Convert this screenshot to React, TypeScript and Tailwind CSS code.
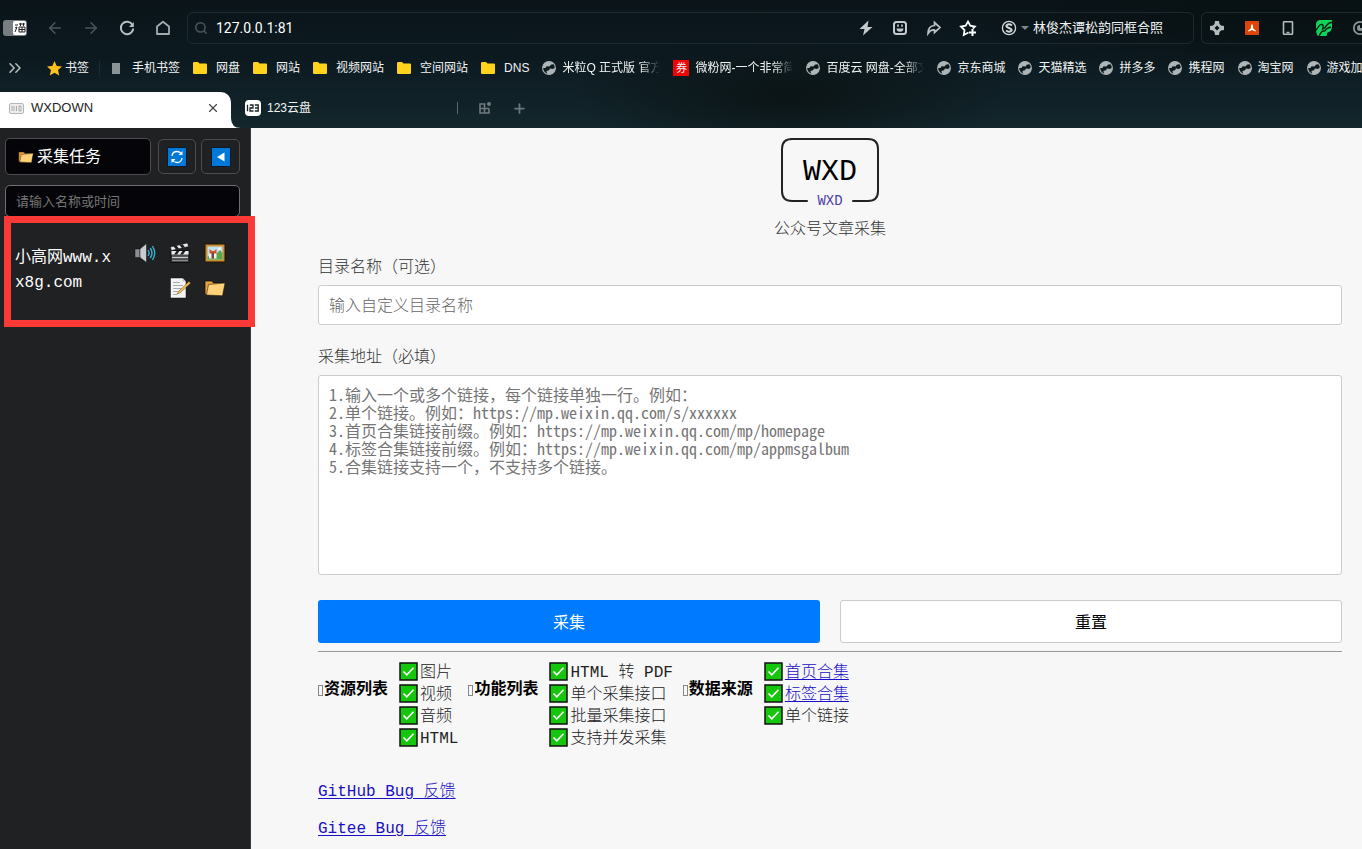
import React, { useState } from 'react';
import { ArrowLeft, ArrowRight, ChevronsRight, Plus, Search, X } from 'lucide-react';

interface Bookmark {
  label: string;
  icon: 'folder' | 'globe' | 'ticket';
  clipped?: boolean;
}

const bookmarks: Bookmark[] = [
  { label: '网盘', icon: 'folder' },
  { label: '网站', icon: 'folder' },
  { label: '视频网站', icon: 'folder' },
  { label: '空间网站', icon: 'folder' },
  { label: 'DNS', icon: 'folder' },
  { label: '米粒Q 正式版 官方', icon: 'globe', clipped: true },
  { label: '微粉网-一个非常简', icon: 'ticket', clipped: true },
  { label: '百度云 网盘-全部文', icon: 'globe', clipped: true },
  { label: '京东商城', icon: 'globe' },
  { label: '天猫精选', icon: 'globe' },
  { label: '拼多多', icon: 'globe' },
  { label: '携程网', icon: 'globe' },
  { label: '淘宝网', icon: 'globe' },
  { label: '游戏加', icon: 'globe' },
];

const features = [
  { title: '资源列表', items: ['图片', '视频', '音频', 'HTML'] },
  { title: '功能列表', items: ['HTML 转 PDF', '单个采集接口', '批量采集接口', '支持并发采集'] },
  { title: '数据来源', items: ['首页合集', '标签合集', '单个链接'], links: 2 },
];

const urlHint = [
  '1.输入一个或多个链接，每个链接单独一行。例如：',
  '2.单个链接。例如：https://mp.weixin.qq.com/s/xxxxxx',
  '3.首页合集链接前缀。例如：https://mp.weixin.qq.com/mp/homepage',
  '4.标签合集链接前缀。例如：https://mp.weixin.qq.com/mp/appmsgalbum',
  '5.合集链接支持一个，不支持多个链接。',
].join('\n');

/* ---------- icons ---------- */

const FolderYellow = () => (
  <svg className="w-[14px] h-[14px] shrink-0" viewBox="0 0 14 14">
    <path d="M0 2.2Q0 1 1.2 1H5l1.5 1.500h6.300Q14 2.500 14 3.700v8.100q0 1.200-1.200 1.200H1.200Q0 13 0 11.800z" fill="#ffd21c" />
  </svg>
);

const Globe = () => (
  <svg className="w-[14px] h-[14px] shrink-0" viewBox="0 0 14 14">
    <circle cx="7" cy="7" r="6.4" fill="none" stroke="#aeb5b7" strokeWidth="1.1" />
    <path d="M.8 7Q1 2 5.500.800q4-.6 6.500 2.200L8.800 3.800 7.500 5.500 4.500 5.300 3.500 7z" fill="#aeb5b7" />
    <path d="M13.300 6.200Q13.400 11 9 13q-2.500.6-4-.2L4.500 10 7 9.200 8 7.500l3 .5z" fill="#aeb5b7" />
  </svg>
);

const FolderEmoji = ({ className }: { className: string }) => (
  <svg className={className} viewBox="0 0 22 22">
    <path d="M1 4h7l1.500 2H19v12.500H3L1 17z" fill="#e9a23c" stroke="#15120c" strokeWidth=".8" />
    <path d="M4.500 7.500 21 6 18.500 18.700 2.500 18z" fill="#ffd27a" stroke="#15120c" strokeWidth=".5" />
  </svg>
);

const SpeakerEmoji = () => (
  <svg className="w-[22px] h-[22px]" viewBox="0 0 22 22">
    <path d="M1 7h5v8.500H1z" fill="#8b8f94" stroke="#111" strokeWidth=".5" />
    <path d="M6 7 12.500 1.500v19L6 15.500z" fill="#c9ccd0" stroke="#111" strokeWidth=".5" />
    <g fill="none" stroke="#35b5cf" strokeWidth="1.400" strokeLinecap="round">
      <path d="M14.300 8.500q1.500 2.500 0 5" />
      <path d="M16.500 6.500q3 4.500 0 9" />
      <path d="M18.700 4.500q4 6.500 0 13" />
    </g>
  </svg>
);

const ClapperEmoji = () => (
  <svg className="w-[22px] h-[22px]" viewBox="0 0 22 22">
    <path d="M2 8.500h18v12H2z" fill="#4b4d50" stroke="#0d0d0d" />
    <path d="M2.500 9h17v3.500h-17z" fill="#ececec" />
    <path d="M5 12.500 7.500 9h3L8 12.500zM11 12.500 13.500 9h3L14 12.500z" fill="#1c1c1c" />
    <path d="M1.500 5 18.500 1l1 3.500L2.300 8.500z" fill="#ececec" stroke="#0d0d0d" strokeWidth=".5" />
    <path d="M4.500 4.300 7 7.400l3-.7-2.500-3.100zM10.500 2.900 13 6l3-.7-2.500-3.100z" fill="#1c1c1c" />
    <path d="M3 15.500h16" stroke="#c9cbcd" strokeWidth="1.200" />
    <path d="M3 18.500h16" stroke="#85888a" />
  </svg>
);

const PictureEmoji = () => (
  <svg className="w-[22px] h-[22px]" viewBox="0 0 22 22">
    <path d="M1 2h20v18H1z" fill="#c98f2b" stroke="#1a1408" />
    <path d="M3.500 4.500h15v13h-15z" fill="#bfe0f2" />
    <path d="M3.500 14.500 10 13l3-2 3-3 2.500 3v6.500h-15z" fill="#5aa64c" />
    <path d="M5.500 7 8 9h2l2.500-2v6H5.500z" fill="#d9512c" />
    <path d="M5 11.500h3.500v5H5zM9.500 11.500h3v5h-3z" fill="#f5f0ea" />
    <path d="M7.500 10.500h2.500v6H7.500z" fill="#6b4a4a" />
    <circle cx="15.500" cy="6.800" r="1.400" fill="#fff" />
  </svg>
);

const MemoEmoji = () => (
  <svg className="w-[22px] h-[22px]" viewBox="0 0 22 22">
    <path d="M1.500 1h12l3.500 3.500V21H1.500z" fill="#f4f4f4" stroke="#0d0d0d" strokeWidth=".5" />
    <path d="M13.500 1v3.500H17z" fill="#c4c6c8" />
    <path d="M4 5.500h7M4 8.500h10M4 11.500h8M4 14.500h5M4 17.500h4" stroke="#a8abae" />
    <path d="M8 17 9.500 14.300 20 4.500l1.500 1.700L11 16z" fill="#eebb5a" stroke="#5c4213" strokeWidth=".4" />
  </svg>
);

const CheckEmoji = () => (
  <svg className="w-[19px] h-[19px] shrink-0" viewBox="0 0 19 19">
    <path d="M1 1h17v17H1z" fill="#16c60c" stroke="#111" strokeWidth="1.500" />
    <path d="M4.500 9.500 7.800 12.800 14.500 5.800" fill="none" stroke="#fff" strokeWidth="1.600" />
  </svg>
);

const Logo = () => (
  <svg className="w-[98px] h-[72px]" viewBox="0 0 98 72" fontFamily="'Liberation Mono', monospace">
    <path
      d="M26 63H11Q1 63 1 53V11Q1 1 11 1H87Q97 1 97 11V53Q97 63 87 63H72"
      fill="none" stroke="#222" strokeWidth="2" strokeLinecap="round"
    />
    <text x="49" y="42" textAnchor="middle" fontSize="30" fill="#000">WXD</text>
    <text x="49" y="67" textAnchor="middle" fontSize="14" fill="#4a3fa8">WXD</text>
  </svg>
);

/* ---------- browser chrome ---------- */

const iconButton = 'w-9 h-8 flex items-center justify-center shrink-0';
const toolButton = 'w-[34px] h-[30px] flex items-center justify-center shrink-0';

const AddressBar = () => (
  <div className="flex items-center h-8 mt-3">
    <button type="button" aria-label="profile" className="ml-[3px] mr-[10px] w-6 h-4 rounded-[3px] bg-[#777d80] flex justify-end items-center p-px shrink-0">
      <svg className="w-[13px] h-[14px]" viewBox="0 0 13 14">
        <rect width="13" height="14" rx="2" fill="#fff" />
        <path d="M2 4h3M2 7l2-1-2 5M6 3h6M7.500 2v3M10.500 2v3M6 6h6v5H6zM9 6v5M6 8.500h6" stroke="#222" fill="none" />
      </svg>
    </button>
    <button type="button" aria-label="back" className={iconButton}><ArrowLeft size={18} color="#4b565a" /></button>
    <button type="button" aria-label="forward" className={iconButton}><ArrowRight size={18} color="#4b565a" /></button>
    <button type="button" aria-label="reload" className={iconButton}>
      <svg className="w-4 h-4" viewBox="0 0 16 16" fill="none" stroke="#b9c0c2" strokeWidth="2">
        <path d="M13.500 5A6.200 6.200 0 1 0 14.200 8.500" />
        <path d="M14.800 2v5H10z" fill="#b9c0c2" stroke="none" />
      </svg>
    </button>
    <button type="button" aria-label="home" className={iconButton}>
      <svg className="w-4 h-4" viewBox="0 0 16 16" fill="none" stroke="#a4abad" strokeWidth="1.800">
        <path d="M2 6.500 8 1.800 14 6.500V14H2z" strokeLinejoin="round" />
      </svg>
    </button>

    <div className="flex flex-1 items-center h-8 ml-[6px] border border-[#1b2a30] rounded-md min-w-0">
      <Search size={14} strokeWidth={2.5} color="#4a565a" className="ml-[6px] shrink-0" />
      <input aria-label="address" defaultValue="127.0.0.1:81" className="flex-1 min-w-0 ml-2 bg-transparent text-white text-sm font-['Roboto','Noto_Sans_CJK_SC',sans-serif] outline-none" />
      <button type="button" aria-label="boost" className={toolButton}>
        <svg className="w-4 h-4" viewBox="0 0 16 16"><path d="M10.500.500 1.500 9h5L5 15.500 14.500 7h-5z" fill="#c4cacb" /></svg>
      </button>
      <button type="button" aria-label="emoji" className={toolButton}>
        <svg className="w-4 h-4" viewBox="0 0 16 16" fill="none" stroke="#c4cacb" strokeWidth="2">
          <rect x="2" y="2" width="12" height="12" rx="2.500" />
          <path d="M4.500 8.500h7q-.3 3.300-3.500 3.300t-3.500-3.300z" fill="#c4cacb" stroke="none" />
          <path d="M6 4.500v2.300M10 4.500v2.300" strokeWidth="1.600" />
        </svg>
      </button>
      <button type="button" aria-label="share" className={toolButton}>
        <svg className="w-4 h-4" viewBox="0 0 16 16" fill="none" stroke="#b9c0c2" strokeWidth="1.700">
          <path d="M8.500 2.500l5.500 5-5.500 5V10Q4.500 9.500 2 13.500 2 6 8.500 5.500z" />
        </svg>
      </button>
      <button type="button" aria-label="favorite" className={toolButton}>
        <svg className="w-[18px] h-[18px]" viewBox="0 0 18 18" fill="none" stroke="#fff" strokeWidth="1.800">
          <path d="M9.500 13.500 4.800 16l.7-5L2 7.500l4.700-.8L9 2.500l2.300 4.200 4.500.8-2 2" />
          <path d="M13.500 10v7M10 13.500h7" strokeWidth="2" />
        </svg>
      </button>
      <button type="button" className="flex items-center ml-4 mr-[30px] gap-1 text-[13px] text-[#f1f3f3] whitespace-nowrap">
        <svg className="w-4 h-4" viewBox="0 0 16 16" fill="none" stroke="#d5d9da">
          <circle cx="8" cy="8" r="6.600" strokeWidth="1.300" />
          <path d="M11 5.500Q8 3.500 6 5T8 8t2 3-5-.5" strokeWidth="2" />
        </svg>
        <svg className="w-2 h-2" viewBox="0 0 8 8"><path d="M0 2h8L4 6z" fill="#7f888b" /></svg>
        <span>林俊杰谭松韵同框合照</span>
      </button>
    </div>

    <div className="flex items-center h-8 w-[161px] ml-[7px] border border-r-0 border-[#1b2a30] rounded-l-md overflow-hidden shrink-0">
      <button type="button" aria-label="extensions" className="w-[30px] flex justify-center shrink-0">
        <svg className="w-4 h-4" viewBox="0 0 16 16">
          <path d="M6 1h4l.5 3L12 5.500l3 .5v4l-3 .5-1.500 1.500-.5 3H6l-.5-3L4 10.500 1 10V6l3-.5L5.500 4zM8 5.500 5.500 8 8 10.500 10.500 8z" fill="#b4bbbd" fillRule="evenodd" />
        </svg>
      </button>
      <button type="button" aria-label="pdf" className="w-9 h-8 ml-[2px] flex items-center justify-center shrink-0">
        <svg className="w-[14px] h-[14px]" viewBox="0 0 14 14">
          <rect width="14" height="14" rx="1" fill="#dd4608" />
          <path d="M6.200 3.500h1.500L8.300 7.500l2.700 2.300-.5.700L7 9 3.500 10.500 3 9.800 5.700 7.500z" fill="#fff" />
        </svg>
      </button>
      <button type="button" aria-label="phone" className={iconButton}>
        <svg className="w-4 h-4" viewBox="0 0 16 16" fill="none" stroke="#b4bbbd" strokeWidth="1.600">
          <rect x="3.500" y="1.800" width="9" height="12.500" rx=".6" /><path d="M6.500 12.500h3" />
        </svg>
      </button>
      <button type="button" aria-label="monitor" className={iconButton}>
        <svg className="w-4 h-4" viewBox="0 0 16 16">
          <path d="M0 3.500Q1 0 4 0h12v7q-.5 5-4.500 5.500L10.500 16H2Q-.5 14 0 3.500z" fill="#12d35a" />
          <path d="M0 10.500Q4 3.500 6 4.500T6.500 9Q8 9 10.500 5.500T16 2.500M3 16Q6 10.500 7.500 11t2-1T15 7" stroke="#0b2018" strokeWidth="1.400" fill="none" />
        </svg>
      </button>
      <button type="button" aria-label="more" className={iconButton}>
        <svg className="w-4 h-4" viewBox="0 0 16 16" fill="none" stroke="#8b9496" strokeWidth="1.800">
          <circle cx="8" cy="8" r="6.200" /><path d="M8 5A3 3 0 1 0 11 8H8z" fill="#8b9496" stroke="none" />
        </svg>
      </button>
    </div>
  </div>
);

const BookmarkBar = () => (
  <nav className="flex items-center h-12 text-xs text-[#f1f3f3] whitespace-nowrap overflow-hidden">
    <ChevronsRight size={20} strokeWidth={1.8} color="#b9c0c2" className="ml-[5px] shrink-0" />
    <a href="#" className="flex items-center gap-[3px] ml-[22px]">
      <svg className="w-[15px] h-[15px]" viewBox="0 0 15 15">
        <path d="M7.500 0l2.200 5 5.300.5-4 3.600 1.200 5.400L7.500 11.700 2.800 14.500 4 9.100 0 5.500 5.300 5z" fill="#ffc21a" />
      </svg>
      书签
    </a>
    <span className="w-px h-4 bg-[#1b2a30] ml-[10px] shrink-0" />
    <a href="#" className="flex items-center gap-3 ml-[12px] mr-[13px]">
      <span className="w-2 h-[11px] bg-[#8a9396]" />
      手机书签
    </a>
    <div className="flex items-center gap-[13px]">
      {bookmarks.map((b) => (
        <a href="#" key={b.label} className={`flex items-center shrink-0 ${b.icon === 'folder' ? 'gap-[9px]' : 'gap-[6px]'}`}>
          {b.icon === 'folder' && <FolderYellow />}
          {b.icon === 'globe' && <Globe />}
          {b.icon === 'ticket' && <span className="w-4 h-4 leading-4 bg-[#f00505] text-center text-[11px]">券</span>}
          {b.clipped ? (
            <span className="w-[98px] overflow-hidden [mask-image:linear-gradient(to_right,#000_80%,transparent)]">{b.label}</span>
          ) : (
            <span>{b.label}</span>
          )}
        </a>
      ))}
    </div>
  </nav>
);

const TabStrip = () => (
  <div className="flex items-end h-9">
    <div className="flex items-center w-[231px] h-9 pb-1 pl-[9px] pr-[11px] bg-white rounded-tr-[10px] text-[13px] text-[#222]">
      <svg className="w-[15px] h-[11px] mr-[7px]" viewBox="0 0 15 11">
        <rect x=".5" y=".5" width="14" height="10" rx="1.500" fill="#eee" stroke="#b5b5b5" />
        <path d="M3 3v5M5 3v5M7.500 3v5M10 3h2v5h-2z" stroke="#aaa" fill="none" />
      </svg>
      <span className="flex-1">WXDOWN</span>
      <button type="button" aria-label="close tab"><X size={14} strokeWidth={2} color="#444" /></button>
    </div>
    <svg className="w-[10px] h-[10px] shrink-0" viewBox="0 0 10 10"><path d="M0 0Q0 10 10 10H0z" fill="#fff" /></svg>
    <div className="flex items-center w-[216px] h-9 pb-1 pl-1 gap-[6px] text-xs text-[#f1f3f3]">
      <svg className="w-4 h-4" viewBox="0 0 16 16">
        <rect width="16" height="16" rx="4" fill="#fff" />
        <path d="M2.500 4.800v6.400M4.800 5h3.200v3H5v3h3.500M9.800 5h3.400v6H9.800M10 8h3" stroke="#1a2226" strokeWidth="1.300" fill="none" />
      </svg>
      <span>123云盘</span>
    </div>
    <div className="flex items-center h-9 pb-1">
      <span className="w-px h-3 bg-[#5d696d]" />
      <button type="button" aria-label="tab groups" className="ml-5">
        <svg className="w-[14px] h-[14px]" viewBox="0 0 14 14" fill="none" stroke="#6d797d" strokeWidth="1.600">
          <path d="M7.500 3H2v9h9V7.500M2 7.500h9M6.500 3v9" /><circle cx="11" cy="3" r="2" fill="#6d797d" stroke="none" />
        </svg>
      </button>
      <button type="button" aria-label="new tab" className="ml-5"><Plus size={15} strokeWidth={2.8} color="#6d797d" /></button>
    </div>
  </div>
);

/* ---------- page ---------- */

const Sidebar = () => {
  const [keyword, setKeyword] = useState('');
  return (
    <aside className="relative w-[251px] shrink-0 bg-[#202123] border-r border-[#3a3b3d] text-white">
      <div className="flex items-center gap-[5px] pt-[10px] pl-[5px] pr-[10px]">
        <button type="button" className="flex items-center flex-1 h-[37px] mr-[2px] pl-3 gap-[3px] bg-[#050509] border border-[#4d4d4f] rounded-[5px] text-base">
          <FolderEmoji className="w-4 h-4" />
          采集任务
        </button>
        <button type="button" aria-label="刷新" className="w-[38px] h-[35px] flex items-center justify-center border border-[#4d4d4f] rounded-[5px]">
          <svg className="w-5 h-5" viewBox="0 0 20 20">
            <path d="M.5.500h19v19H.5z" fill="#0078d7" stroke="#0a1a2a" />
            <path d="M5 9q.5-4.500 5-4.500 3 0 4.500 2.500M15 11q-.5 4.500-5 4.500-3 0-4.500-2.500" fill="none" stroke="#fff" strokeWidth="1.300" />
            <path d="M15.500 4v4h-4zM4.500 16v-4h4z" fill="#fff" />
          </svg>
        </button>
        <button type="button" aria-label="收起" className="w-[39px] h-[35px] flex items-center justify-center border border-[#4d4d4f] rounded-[5px]">
          <svg className="w-5 h-5" viewBox="0 0 20 20">
            <path d="M.5.500h19v19H.5z" fill="#0078d7" stroke="#0a1a2a" />
            <path d="M13.500 5.500v9L6 10z" fill="#fff" />
          </svg>
        </button>
      </div>
      <input
        value={keyword}
        onChange={(e) => setKeyword(e.target.value)}
        aria-label="搜索"
        placeholder="请输入名称或时间"
        className="block w-[235px] h-8 mt-[10px] ml-[5px] px-[10px] bg-[#050509] border border-[#6f6f71] rounded-[5px] text-[13px] placeholder:text-[#757575] outline-none"
      />
      <div className="flex pt-[18px] pl-[15px] pr-6">
        <p className="w-[97px] pt-[11px] leading-[25px] break-all font-['Liberation_Mono','Noto_Sans_CJK_SC',monospace]">小高网www.xx8g.com</p>
        <div className="flex flex-1 flex-col items-end gap-[13px] pt-[7px]">
          <div className="flex gap-[13px]">
            <button type="button" aria-label="音频"><SpeakerEmoji /></button>
            <button type="button" aria-label="视频"><ClapperEmoji /></button>
            <button type="button" aria-label="图片"><PictureEmoji /></button>
          </div>
          <div className="flex gap-[13px]">
            <button type="button" aria-label="文档"><MemoEmoji /></button>
            <button type="button" aria-label="目录"><FolderEmoji className="w-[22px] h-[22px]" /></button>
          </div>
        </div>
      </div>
      {/* highlight frame, hangs over the sidebar edge */}
      <div className="absolute z-10 top-[88px] left-1 w-[251px] h-[111px] border-[7px] border-[#f93a37] pointer-events-none" />
    </aside>
  );
};

const linkClass = 'text-[#1a0fc4] underline underline-offset-2';

const CollectForm = () => {
  const [dir, setDir] = useState('');
  const [urls, setUrls] = useState('');
  const reset = () => {
    setDir('');
    setUrls('');
  };

  return (
    <main className="flex-1 min-w-0 pt-[10px] pl-[67px] pr-5 bg-[#f7f7f7] text-[#222] font-light font-['Liberation_Mono','Noto_Sans_CJK_SC',monospace]">
      <div className="flex flex-col items-center">
        <Logo />
        <p className="mt-2 leading-6 text-[#333]">公众号文章采集</p>
      </div>

      <form onSubmit={(e) => e.preventDefault()}>
        <label htmlFor="dir" className="block mt-[14px] h-[29px] leading-6 text-[#333]">目录名称（可选）</label>
        <input
          id="dir"
          value={dir}
          onChange={(e) => setDir(e.target.value)}
          placeholder="输入自定义目录名称"
          className="block w-full h-10 pt-1 px-[10px] bg-white border border-[#ccc] rounded-[3px] placeholder:text-[#666] outline-none"
        />
        <label htmlFor="urls" className="block mt-[21px] h-[29px] leading-6 text-[#333]">采集地址（必填）</label>
        <textarea
          id="urls"
          value={urls}
          onChange={(e) => setUrls(e.target.value)}
          placeholder={urlHint}
          className="block w-full h-[200px] pt-[9px] px-[10px] bg-white border border-[#ccc] rounded-[3px] leading-[18px] resize-none placeholder:text-[#757575] outline-none font-['Noto_Sans_Mono_CJK_SC','Noto_Sans_CJK_SC',monospace]"
        />
        <div className="grid grid-cols-2 gap-5 mt-[25px]">
          <button type="submit" className="h-[43px] pt-1 bg-[#007bff] rounded-[3px] text-white font-normal">采集</button>
          <button type="button" onClick={reset} className="h-[43px] pt-1 bg-white border border-[#ccc] rounded-[3px] text-black font-normal">重置</button>
        </div>
      </form>

      <hr className="mt-2 border-[#999]" />

      <div className="flex items-start gap-[10px] pt-[10px]">
        {features.map((group) => (
          <div key={group.title} className="flex items-start gap-[11px]">
            <h3 className="flex items-center gap-px pt-[17px] leading-[22px] font-bold text-black whitespace-nowrap">
              <span className="w-[5px] h-[11px] border border-[#888]" />
              {group.title}
            </h3>
            <ul>
              {group.items.map((item, i) => (
                <li key={item} className="flex items-start gap-[2px] h-[22px] leading-[22px] whitespace-nowrap">
                  <CheckEmoji />
                  {group.links && i < group.links ? <a href="#" className={linkClass}>{item}</a> : <span>{item}</span>}
                </li>
              ))}
            </ul>
          </div>
        ))}
      </div>

      <p className="mt-[31px] leading-[22px]"><a href="#" className={linkClass}>GitHub Bug 反馈</a></p>
      <p className="mt-[15px] leading-[22px]"><a href="#" className={linkClass}>Gitee Bug 反馈</a></p>
    </main>
  );
};

const App: React.FC = () => (
  <div className="flex flex-col min-h-screen overflow-hidden font-['Liberation_Sans','Noto_Sans_CJK_SC',sans-serif]">
    <header className="bg-[radial-gradient(ellipse_16%_50%_at_58%_75%,#0b1416,transparent),radial-gradient(ellipse_25%_50%_at_95%_10%,#081012,transparent),linear-gradient(to_bottom,#0a1419,#0c1a20_45%,#13272d)]">
      <AddressBar />
      <BookmarkBar />
      <TabStrip />
    </header>
    <div className="flex flex-1">
      <Sidebar />
      <CollectForm />
    </div>
  </div>
);

export default App;
